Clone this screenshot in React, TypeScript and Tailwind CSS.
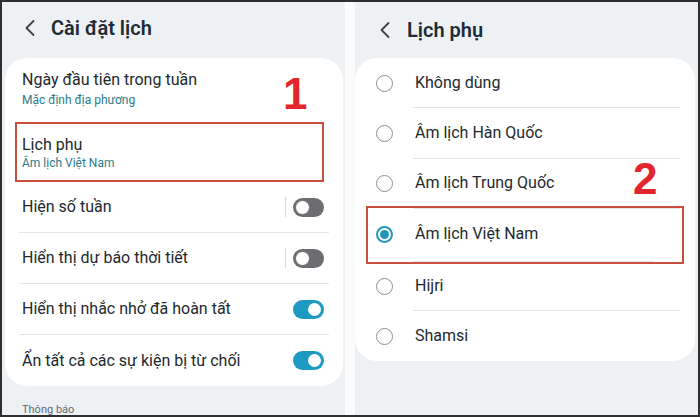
import React from "react";

const font = { fontFamily: "Roboto, 'Noto Sans', 'Liberation Sans', sans-serif" };

function Chevron() {
  return (
    <svg width="12" height="18" viewBox="0 0 12 18" fill="none">
      <path d="M9.5 2 L2.5 9 L9.5 16" stroke="#3a4248" strokeWidth="1.8" strokeLinecap="round" strokeLinejoin="round" />
    </svg>
  );
}

function Toggle({ on }: { on: boolean }) {
  if (on) {
    return (
      <div className="w-[31px] h-[19px] rounded-full bg-[#1d9ac2] flex items-center justify-end px-[3px]">
        <div className="w-[13px] h-[13px] rounded-full bg-white" />
      </div>
    );
  }
  return (
    <div className="w-[31px] h-[19px] rounded-full bg-[#6b6d70] flex items-center px-[2px]">
      <div className="w-[15px] h-[15px] rounded-full bg-white border border-[#6b6d70]" />
    </div>
  );
}

function Radio({ on }: { on: boolean }) {
  if (on) {
    return (
      <div className="w-[17px] h-[17px] rounded-full border-[2px] border-[#2196b8] flex items-center justify-center">
        <div className="w-[9px] h-[9px] rounded-full bg-[#2196b8]" />
      </div>
    );
  }
  return <div className="w-[17px] h-[17px] rounded-full border-[1.5px] border-[#8a8d90]" />;
}

function ToggleRow({ label, on, sep, divider }: { label: string; on: boolean; sep?: boolean; divider?: boolean }) {
  return (
    <div className="h-[51px] shrink-0 flex flex-col">
      <div className={"flex-1 flex items-center mx-[14px] pl-[3px] pr-[5px]" + (divider ? " border-b border-[#e4e6e8]" : "")}>
        <span className="flex-1 text-[16px] text-[#22292e]">{label}</span>
        {sep && <div className="w-px h-[20px] bg-[#d6d8da] mr-[7px]" />}
        <Toggle on={on} />
      </div>
    </div>
  );
}

export default function App() {
  const options = ["Không dùng", "Âm lịch Hàn Quốc", "Âm lịch Trung Quốc", "Âm lịch Việt Nam", "Hijri", "Shamsi"];
  return (
    <div className="w-[700px] h-[417px] bg-[#2e2e2e] p-[2px] flex overflow-hidden" style={font}>
      {/* Left panel */}
      <div className="w-[343px] h-full bg-[#edf1f4] flex flex-col relative overflow-hidden">
        <div className="h-[56px] shrink-0 flex items-center pl-[22px] gap-[15px] pb-[4px]">
          <Chevron />
          <span className="text-[20px] font-semibold text-[#1d2c36]">Cài đặt lịch</span>
        </div>
        <div className="shrink-0 ml-[3px] mr-[2px] bg-white rounded-[22px] flex flex-col">
          <div className="h-[64px] shrink-0 flex flex-col pt-[12px] pl-[17px]">
            <span className="text-[16px] text-[#22292e] leading-[20px]">Ngày đầu tiên trong tuần</span>
            <span className="text-[12px] text-[#2a7b8c] leading-[14px] mt-[3px]">Mặc định địa phương</span>
          </div>
          <div className="shrink-0 ml-[10px] mr-[19px] h-[60px] border-2 border-[#c9503e] flex flex-col justify-center pl-[5px]">
            <span className="text-[16px] text-[#22292e] leading-[20px]">Lịch phụ</span>
            <span className="text-[12px] text-[#2a7b8c] leading-[14px] mt-[1px]">Âm lịch Việt Nam</span>
          </div>
          <ToggleRow label="Hiện số tuần" on={false} sep divider />
          <ToggleRow label="Hiển thị dự báo thời tiết" on={false} sep divider />
          <ToggleRow label="Hiển thị nhắc nhở đã hoàn tất" on={true} divider />
          <ToggleRow label="Ẩn tất cả các sự kiện bị từ chối" on={true} />
        </div>
        <div className="shrink-0 pl-[20px] pt-[16px] text-[11px] text-[#5e6a72]">Thông báo</div>
        <span className="absolute left-[281px] top-[70px] text-[44px] font-bold text-[#e3262b] leading-none" style={{ fontFamily: "'Liberation Sans', Arial, sans-serif" }}>1</span>
      </div>
      {/* White gap */}
      <div className="w-[10px] h-full bg-[#fbfbfb]" />
      {/* Right panel */}
      <div className="flex-1 h-full bg-[#edf1f4] flex flex-col relative">
        <div className="h-[56px] shrink-0 flex items-center pl-[24px] gap-[16px]">
          <Chevron />
          <span className="text-[20px] font-semibold text-[#1d2c36]">Lịch phụ</span>
        </div>
        <div className="shrink-0 mr-[3px] bg-white rounded-[22px] flex flex-col">
          {options.map((o, i) => (
            <div key={o} className={"h-[50.3px] shrink-0 flex items-center relative" + (i === 3 ? " mx-[11px] border-2 border-[#c9503e] -my-[3px] h-[58px] z-10" : "")}>
              <div className={"flex items-center h-full w-full" + (i === 3 ? " -ml-[13px]" : "")}>
                <div className="w-[58px] shrink-0 flex justify-center">
                  <Radio on={i === 3} />
                </div>
                <div className={"flex-1 h-full flex items-center mr-[15px] pl-[2px]" + (i < 5 ? " border-b border-[#e4e6e8]" : "")}>
                  <span className="text-[16px] text-[#22292e]">{o}</span>
                </div>
              </div>
            </div>
          ))}
        </div>
        <span className="absolute left-[278px] top-[155px] text-[44px] font-bold text-[#e3262b] leading-none" style={{ fontFamily: "'Liberation Sans', Arial, sans-serif" }}>2</span>
      </div>
    </div>
  );
}
